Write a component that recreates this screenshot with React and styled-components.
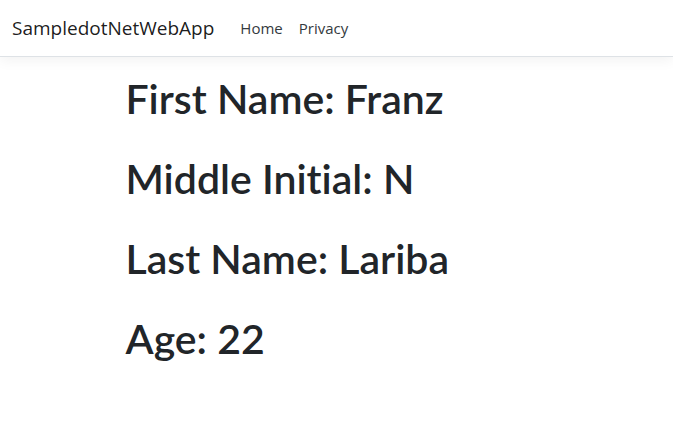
import React from 'react'
import styled, { createGlobalStyle } from 'styled-components'

const GlobalStyle = createGlobalStyle`
    body {
        margin: 0;
        background: #fff;
        color: #212529;
        font-family: "Open Sans", "Noto Sans", sans-serif;
    }
`

const Header = styled.header`
    height: 56px;
    display: flex;
    align-items: center;
    padding: 0 12px;
    border-bottom: 1px solid #dee2e6;
    box-shadow: 0 4px 12px rgba(0, 0, 0, 0.05);
    background: #fff;
`

const Brand = styled.a`
    font-size: 19px;
    color: rgba(0, 0, 0, 0.9);
    text-decoration: none;
    margin-right: 26px;
`

const NavList = styled.nav`
    display: flex;
    gap: 16px;
`

const NavLink = styled.a`
    font-size: 15px;
    color: #343a40;
    text-decoration: none;
`

const Main = styled.main`
    max-width: 422px;
    margin: 0 auto;
    padding: 17px 15px 0;
`

const Field = styled.h1`
    font-family: Lato, "Open Sans", sans-serif;
    font-size: 41px;
    font-weight: 600;
    font-variant-ligatures: none;
    line-height: 50px;
    margin: 0 0 30px;
    color: #212529;
`

const person = [
    ['First Name', 'Franz'],
    ['Middle Initial', 'N'],
    ['Last Name', 'Lariba'],
    ['Age', '22'],
]

const App = () => {
    return (
        <>
            <GlobalStyle />
            <Header>
                <Brand href="#">SampledotNetWebApp</Brand>
                <NavList>
                    <NavLink href="#">Home</NavLink>
                    <NavLink href="#">Privacy</NavLink>
                </NavList>
            </Header>
            <Main>
                {person.map(([label, value]) => (
                    <Field key={label}>{label}: {value}</Field>
                ))}
            </Main>
        </>
    )
}

export default App
